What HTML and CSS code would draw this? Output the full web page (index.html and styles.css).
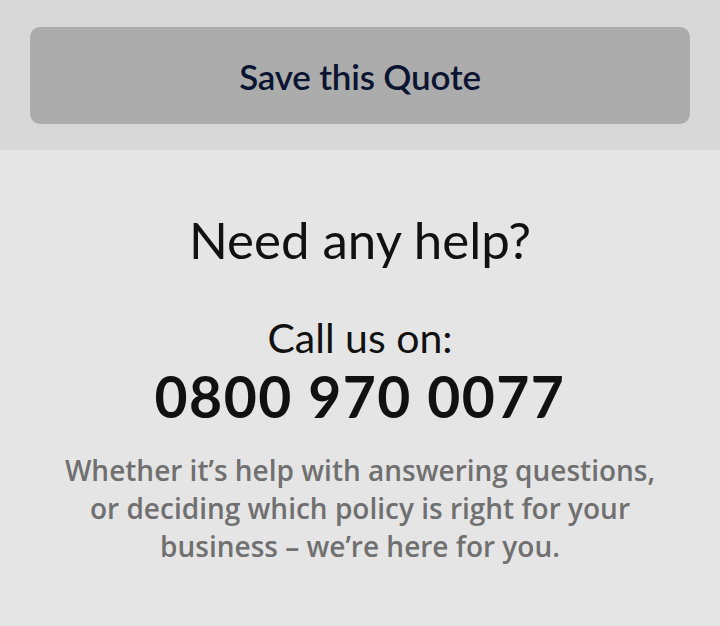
FILE: index.html
```html
<!DOCTYPE html>
<html>
<head>
<meta charset="utf-8">
<link rel="stylesheet" href="styles.css">
</head>
<body>
<div class="save-bar">
  <button class="save-btn">Save this Quote</button>
</div>
<div class="help">
  <h2 class="help-title">Need any help?</h2>
  <p class="call">Call us on:</p>
  <p class="phone">0800 970 0077</p>
  <p class="desc">Whether it’s help with answering questions, or deciding which policy is right for your business – we’re here for you.</p>
</div>
</body>
</html>
```
FILE: styles.css
```css
html, body {
  margin: 0;
  padding: 0;
  height: 100%;
}
body {
  background: #e5e5e5;
  font-family: Lato, "Open Sans", sans-serif;
}
.save-bar {
  background: #d8d8d8;
  padding: 27px 30px 26px;
}
.save-btn {
  display: block;
  width: 100%;
  height: 97px;
  border: none;
  border-radius: 10px;
  background: #acacac;
  color: #0b1431;
  font-family: Lato, sans-serif;
  font-size: 35px;
  font-weight: 600;
  letter-spacing: -0.2px;
}
.help {
  text-align: center;
  padding: 55px 40px 0;
  color: #111;
}
.help-title {
  margin: 0;
  font-size: 51px;
  font-weight: 400;
  line-height: 70px;
}
.call {
  margin: 38px 0 0;
  font-size: 41px;
  line-height: 50px;
}
.phone {
  margin: 0;
  font-size: 57px;
  font-weight: 700;
  line-height: 66px;
  letter-spacing: 1.5px;
}
.desc {
  margin: 22px auto 0;
  max-width: 600px;
  font-family: "Open Sans", sans-serif;
  font-weight: 600;
  font-size: 28px;
  line-height: 38px;
  color: #707070;
}
```
